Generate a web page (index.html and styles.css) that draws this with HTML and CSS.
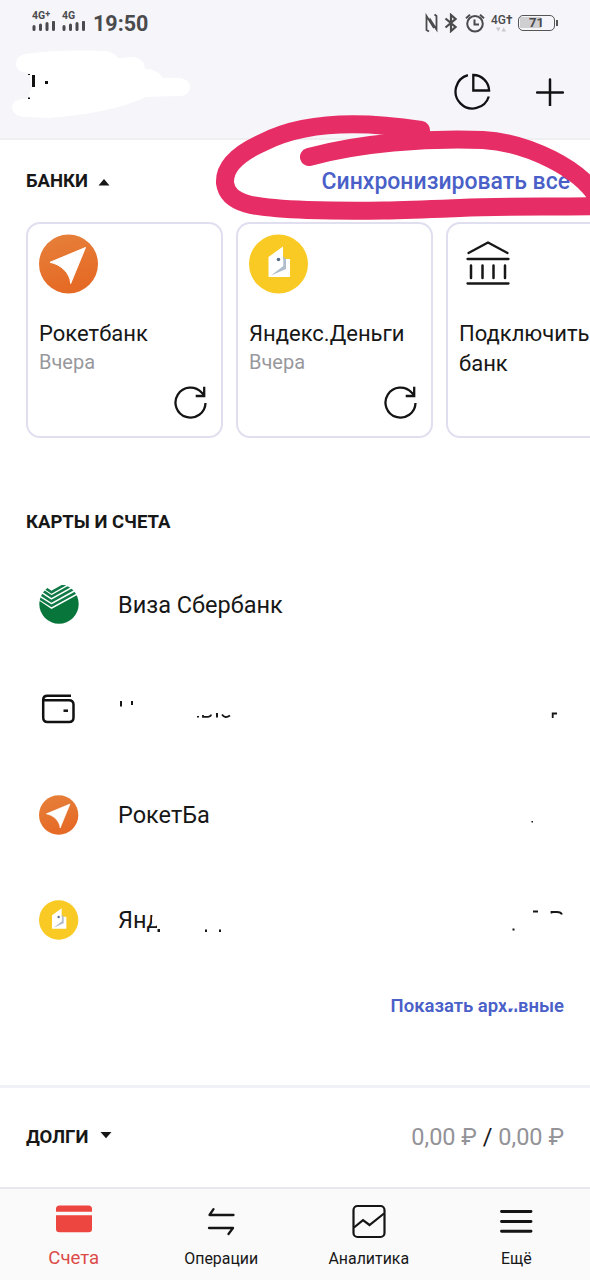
FILE: index.html
```html
<!DOCTYPE html>
<html lang="ru">
<head>
<meta charset="utf-8">
<title>Счета</title>
<link rel="stylesheet" href="styles.css">
</head>
<body>
<svg class="defs" width="0" height="0">
  <defs>
    <linearGradient id="orange" x1="0" y1="0" x2="0.3" y2="1"><stop offset="0" stop-color="#e6813b"/><stop offset="1" stop-color="#e56a25"/></linearGradient>
    <symbol id="rocket" viewBox="0 0 60 60"><circle cx="29.500" cy="30" r="29.500" fill="url(#orange)"/><path d="M46.500 13.500 31.700 49.500C31 39 22 30.500 11 28.300Z" fill="#fff" stroke="#fff" stroke-width="1" stroke-linejoin="round"/></symbol>
    <symbol id="yandex" viewBox="0 0 60 60"><circle cx="29.500" cy="30" r="29.500" fill="#f9ca24"/><path d="M19.500 43V23L34 12.500V25H41V43Z" fill="#fff"/><path d="M34.300 22 37 25.500V35L22 41.500 34.300 32Z" fill="#aebccb"/><circle cx="29.500" cy="25.500" r="1.800" fill="#59718d"/></symbol>
    <symbol id="refresh" viewBox="0 0 36 36"><path d="M32.500 19A15 15 0 1 1 28.600 8.500L31.500 11.500M31.200 2.800V12H22.700" fill="none" stroke="#151515" stroke-width="2.300"/></symbol>
  </defs>
</svg>
<div class="screen">
  <header class="header">
    <div class="status">
      <div class="status-left">
        <div class="signal"><span class="net">4G<sup>+</sup></span><svg width="24" height="11" viewBox="0 0 24 11"><path d="M2 5.500V8.500M8.500 4V8.500M15 2.500V8.500M21.500 1.200V8.500" stroke="#4b4b4d" stroke-width="3" stroke-linecap="round"/></svg></div>
        <div class="signal"><span class="net">4G</span><svg width="24" height="11" viewBox="0 0 24 11"><path d="M2 5.500V8.500M8.500 4V8.500M15 2.500V8.500M21.500 1.200V8.500" stroke="#4b4b4d" stroke-width="3" stroke-linecap="round"/></svg></div>
        <span class="clock">19:50</span>
      </div>
      <div class="status-right">
        <svg class="nfc" width="14" height="20" viewBox="0 0 14 20"><path d="M4 18.500 1.500 17V3L9 15M9.500 1.500 11.500 3V16.500L4.500 5.500" transform="translate(1 0)" fill="none" stroke="#4b4b4d" stroke-width="1.800"/></svg>
        <svg class="bt" width="14" height="20" viewBox="0 0 14 20"><path d="M1.500 5.500 11.500 14 7 18V2L11.500 6 1.500 14.500" transform="translate(1 0)" fill="none" stroke="#4b4b4d" stroke-width="2.200"/></svg>
        <svg class="alarm" width="20" height="20" viewBox="0 0 20 20"><g fill="none" stroke="#4b4b4d" stroke-width="2"><circle cx="10" cy="10.700" r="7.800"/><path d="M9.500 6.500V11.500H14M1 5.200 5 1.800M15 1.800 19 5.200"/></g></svg>
        <div class="net-r"><span class="net">4G<b>†</b></span><svg width="10" height="5" viewBox="0 0 10 5"><path d="M0 .5H4.500L2.200 4.500ZM5.500 4.500H10L7.700 .5Z" fill="#c9c9cd"/></svg></div>
        <div class="battery"><span>71</span></div>
      </div>
    </div>
    <div class="actions">
      <svg width="38" height="38" viewBox="0 0 38 38"><path d="M15.100 2.600A17 17 0 1 0 36 24M20.500 2.500V18H36.300A16 16 0 0 0 20.500 2.500Z" transform="translate(-.2 -.5)" fill="none" stroke="#121214" stroke-width="2.300"/></svg>
      <svg width="28" height="28" viewBox="0 0 28 28"><path d="M14 1.500V27.500M1 14.500H27" stroke="#121214" stroke-width="2.500" stroke-linecap="round"/></svg>
    </div>
  </header>
  <section class="banks">
    <div class="banks-head">
      <h2>БАНКИ</h2>
      <svg width="12" height="8" viewBox="0 0 12 8"><path d="M.5 7.500H11.500L6 1Z" fill="#171717"/></svg>
      <a class="sync">Синхронизировать все</a>
    </div>
    <div class="cards">
      <article class="card">
        <svg class="logo" width="60" height="60"><use href="#rocket"/></svg>
        <p class="name">Рокетбанк</p><p class="when">Вчера</p>
        <svg class="reload" width="36" height="36"><use href="#refresh"/></svg>
      </article>
      <article class="card">
        <svg class="logo" width="60" height="60"><use href="#yandex"/></svg>
        <p class="name">Яндекс.Деньги</p><p class="when">Вчера</p>
        <svg class="reload" width="36" height="36"><use href="#refresh"/></svg>
      </article>
      <article class="card">
        <svg class="logo" width="60" height="60" viewBox="0 0 60 60"><path d="M9.500 19 29 8.500 48.500 19M8.500 25H49.500M8.500 49.500H49.500" fill="none" stroke="#171717" stroke-width="2.300" stroke-linecap="round" stroke-linejoin="round"/><path d="M12 31.500V44M23.500 31.500V44M34.500 31.500V44M46 31.500V44" stroke="#171717" stroke-width="2.500" stroke-linecap="round"/></svg>
        <p class="name">Подключить банк</p>
      </article>
    </div>
  </section>
  <section class="accounts">
    <h2>КАРТЫ И СЧЕТА</h2>
    <div class="row">
      <svg width="40" height="40" viewBox="0 0 40 40"><defs><clipPath id="disc"><circle cx="20" cy="19" r="19.700"/></clipPath></defs><g clip-path="url(#disc)"><path d="M0 15.500 12.500 24 40 9V40H0Z" fill="#08753b"/><path d="M0 12.600 12.500 20.500 40 5.500M1 8.500 12.500 15.800 36 2.800M2.500 4.500 12.500 11.200 32 .3M4.500 1.500 12.500 6.800 28 -2" transform="translate(0 .4)" fill="none" stroke="#0f7a45" stroke-width="2.500"/></g></svg>
      <span>Виза Сбербанк</span>
    </div>
    <div class="row">
      <svg width="40" height="40" viewBox="0 0 40 40"><g transform="translate(0 -1)" fill="none" stroke="#111" stroke-width="2.500"><path d="M32 6.800H8.500Q4.200 6.800 4.200 11V28.500Q4.200 33 8.500 33H30Q34.500 33 34.500 28.500V15.500Q34.500 11.300 30 11.300H4.200"/><path d="M24.500 21.700H29"/></g></svg>
    </div>
    <div class="row">
      <svg width="40" height="40"><use href="#rocket"/></svg>
      <span>РокетБа</span>
    </div>
    <div class="row">
      <svg width="40" height="40"><use href="#yandex"/></svg>
      <span>Янд</span>
    </div>
    <a class="archive">Показать архивные</a>
  </section>
  <section class="debts">
    <h2>ДОЛГИ</h2>
    <svg width="12" height="8" viewBox="0 0 12 8"><path d="M.5 1H11.500L6 7.300Z" fill="#171717"/></svg>
    <span class="sum">0,00 ₽ <b>/</b> 0,00 ₽</span>
  </section>
  <nav class="tabs">
    <div class="tab active"><svg width="38" height="36" viewBox="0 0 38 36"><path d="M1 8.800V6Q1 2.500 4.500 2.500H33.500Q37 2.500 37 6V8.800ZM1 12.300H37V26Q37 29.200 33.500 29.200H4.500Q1 29.200 1 26Z" fill="#ed4540"/></svg><span>Счета</span></div>
    <div class="tab"><svg width="38" height="36" viewBox="0 0 38 36"><path d="M31.500 12H7.500L11.500 6.200M7 25H31L26.500 31" fill="none" stroke="#151515" stroke-width="2.300" stroke-linecap="round" stroke-linejoin="round"/></svg><span>Операции</span></div>
    <div class="tab"><svg width="38" height="36" viewBox="0 0 38 36"><rect x="3.500" y="3" width="31" height="31" rx="4" fill="none" stroke="#151515" stroke-width="2.200"/><path d="M4 24.500 13 17.200 19.500 22 34 10.500" fill="none" stroke="#151515" stroke-width="2.200"/></svg><span>Аналитика</span></div>
    <div class="tab"><svg width="38" height="36" viewBox="0 0 38 36"><path d="M4.500 8.500H34M4.500 18.500H34M4.500 28.300H34" stroke="#151515" stroke-width="2.900" stroke-linecap="round"/></svg><span>Ещё</span></div>
  </nav>
  <svg class="marks" width="590" height="1280" viewBox="0 0 590 1280">
    <path d="M25 54C50 50 85 50 106 51Q114 52 118 58L135 57Q145 60 145 69Q157 69 163 78L180 78Q190 80 190 87Q189 96 180 96L146 97C118 110 85 115 49 118L24 117Q12 115 12 107Q13 99 24 99L29 98Q29 91 32 88L29 73Q16 72 16 64Q16 56 25 54Z" fill="#fff"/>
    <path d="M32 75H35V87H32ZM45 81H48V84H45ZM28 74H30V75H28ZM28 97.500H30V99H28Z" fill="#111"/>
    <path d="M153 905H180V940H157V925.500H153.500L152 921Z" fill="#fff"/>
    <path d="M507 993H518V1008.500H507L505.500 1001Z" fill="#fff"/>
    <path d="M120 701H122V706.500H120ZM131 701H133V705H131ZM197 716H199V717.500H197ZM216 713H218V717.500H216ZM157.500 929H160V932H157.500ZM205 929.500H207V932H205ZM219 929.500H221V932H219ZM531.500 821H533V822.500H531.500ZM512.500 928.500H514.500V930.500H512.500Z" fill="#171717"/>
    <path d="M203 715V716.800H208Q211 716.500 211 714.500M222 714.500Q225 719 230 715.500M552.700 718V713.500H557M533 911.500H538M551.500 913.500V912H557Q561 912 562 914.500" fill="none" stroke="#171717" stroke-width="1.800"/>
    <path d="M421 130C376 123 311 118 264 142C239 153 224 166 225 183C228 204 251 208 307 210C365 212 410 210 460 208C505 206 548 207 602 206C585 167 523 142 483 140C424 138 360 143 309 157" fill="none" stroke="#e72d65" stroke-width="18" stroke-linecap="round" stroke-linejoin="round"/>
  </svg>
</div>
</body>
</html>
```
FILE: styles.css
```css
* { box-sizing: border-box; }
body { margin: 0; background: #fff; font-family: Roboto, "Noto Sans", sans-serif; color: #171717; }
.defs { position: absolute; }
.screen { position: relative; width: 590px; height: 1280px; overflow: hidden; display: flex; flex-direction: column; }
h2, p { margin: 0; }
h2 { font-size: 18.5px; line-height: 24px; font-weight: 700; }
svg { flex: none; display: block; }

.header { height: 140px; background: #f5f5fa; border-bottom: 2px solid #efeff2; flex: none; }
.status { height: 46px; padding: 0 35px 0 32px; display: flex; justify-content: space-between; color: #4b4b4d; }
.status-left { display: flex; gap: 6px; padding-top: 11px; }
.signal { width: 24px; }
.net { display: block; font-size: 10.5px; line-height: 10px; font-weight: 700; white-space: nowrap; }
.net sup { font-size: 9px; line-height: 0; vertical-align: 2px; }
.clock { font-size: 21.5px; line-height: 26px; font-weight: 700; padding-left: 1px; }
.status-right { display: flex; padding-top: 13px; }
.bt { margin-left: 5px; }
.alarm { margin-left: 8px; }
.net-r { margin-left: 6px; width: 21px; }
.net-r .net { font-size: 12px; line-height: 14px; font-weight: 500; }
.net-r svg { margin-left: 5px; }
.battery { position: relative; margin: 2px 0 0 6px; width: 37px; height: 16px; border: 1.5px solid #555; border-radius: 5px; background: linear-gradient(#cfcfd2, #cfcfd2) 1px 1px / 21px 11px no-repeat; font-size: 13px; line-height: 14px; font-weight: 700; text-align: center; }
.battery::after { content: ""; position: absolute; right: -4px; top: 4px; width: 2px; height: 6px; background: #555; }
.actions { display: flex; justify-content: flex-end; align-items: center; gap: 45px; height: 65px; padding: 26px 26px 0 0; }

.banks { height: 298px; flex: none; }
.banks-head { display: flex; align-items: center; height: 82px; padding: 0 20px 0 26px; }
.banks-head svg { margin: 2px 0 0 10px; }
.sync { margin-left: auto; font-size: 23px; font-weight: 500; color: #4a5fc8; }
.cards { display: flex; gap: 13px; padding-left: 26px; }
.card { position: relative; flex: none; width: 197px; height: 216px; border: 2px solid #e0dff0; border-radius: 14px; padding: 10px 10px 0 11px; }
.name { font-size: 22px; line-height: 30px; margin-top: 25px; }
.when { font-size: 20px; line-height: 26px; color: #98989d; }
.reload { position: absolute; right: 12.5px; bottom: 16px; }

.accounts { height: 650px; padding: 72px 26px 0; flex: none; display: flex; flex-direction: column; border-bottom: 3px solid #f1f1f8; }
.row { display: flex; align-items: center; gap: 39px; height: 105px; padding-left: 13px; font-size: 23.5px; flex: none; }
.row span { padding-top: 1px; }
.accounts h2 { margin-bottom: 18px; }
.archive { align-self: flex-end; margin-top: 22px; line-height: 24px; font-size: 18.5px; font-weight: 600; color: #4a5fc8; }

.debts { height: 99px; flex: none; display: flex; align-items: center; padding: 0 26px 2px; }
.debts svg { margin: -4px 0 0 12px; }
.sum { margin-left: auto; font-size: 23.5px; color: #939398; }
.sum b { font-weight: 400; color: #171717; }

.tabs { flex: 1; display: grid; grid-template-columns: repeat(4, 1fr); background: #fafafa; border-top: 2px solid #e8e8ef; }
.tab { display: flex; flex-direction: column; align-items: center; padding-top: 14px; font-size: 15.9px; line-height: 24px; }
.tab span { margin-top: 8px; }
.active { color: #dc4b48; font-size: 18.6px; }
.active span { margin-top: 7px; }
.marks { position: absolute; left: 0; top: 0; pointer-events: none; }
```
